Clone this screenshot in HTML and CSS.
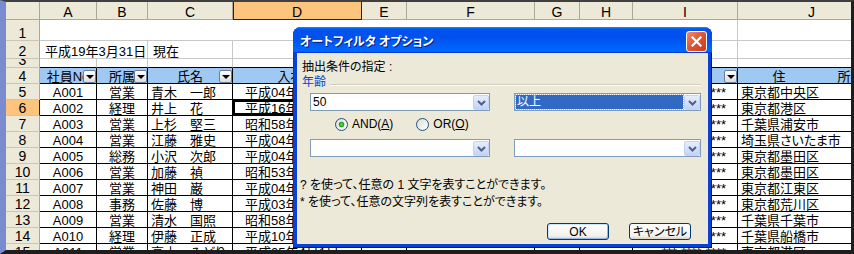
FILE: index.html
```html
<!DOCTYPE html>
<html lang="ja">
<head>
    <meta charset="UTF-8">
    <title>オートフィルタ オプション</title>
    <link rel="stylesheet" href="styles.css">
</head>
<body>
<div class="window">

    <!-- シート -->
    <div class="sheet">
        <div class="row colhead">
            <div class="cell"></div>
            <div class="cell">A</div>
            <div class="cell">B</div>
            <div class="cell">C</div>
            <div class="cell hl">D</div>
            <div class="cell">E</div>
            <div class="cell">F</div>
            <div class="cell">G</div>
            <div class="cell">H</div>
            <div class="cell">I</div>
            <div class="cell">J</div>
        </div>
        <div class="row r1">
            <div class="cell rh">1</div>
            <div class="cell span9"></div>
            <div class="cell"></div>
        </div>
        <div class="row r2">
            <div class="cell rh">2</div>
            <div class="cell span2 pad">平成19年3月31日</div>
            <div class="cell pad">現在</div>
            <div class="cell"></div>
            <div class="cell"></div>
            <div class="cell"></div>
            <div class="cell"></div>
            <div class="cell"></div>
            <div class="cell"></div>
            <div class="cell"></div>
        </div>
        <div class="row r3">
            <div class="cell rh">3</div>
            <div class="cell"></div>
            <div class="cell"></div>
            <div class="cell"></div>
            <div class="cell"></div>
            <div class="cell"></div>
            <div class="cell"></div>
            <div class="cell"></div>
            <div class="cell"></div>
            <div class="cell"></div>
            <div class="cell"></div>
        </div>
        <div class="row tbl hdr">
            <div class="cell rh">4</div>
            <div class="cell filter">社員No<span class="fbtn"></span></div>
            <div class="cell filter">所属<span class="fbtn"></span></div>
            <div class="cell filter">氏名<span class="fbtn"></span></div>
            <div class="cell">入社日</div>
            <div class="cell">勤続</div>
            <div class="cell">生年月日</div>
            <div class="cell">年齢</div>
            <div class="cell">性別</div>
            <div class="cell filter">電話番号<span class="fbtn"></span></div>
            <div class="cell">住　　　　所</div>
        </div>
        <div class="row tbl">
            <div class="cell rh">5</div>
            <div class="cell c">A001</div>
            <div class="cell c">営業</div>
            <div class="cell">青木　一郎</div>
            <div class="cell d">平成04年4月1日</div>
            <div class="cell"></div><div class="cell"></div><div class="cell"></div><div class="cell"></div>
            <div class="cell r">***-****-****</div>
            <div class="cell">東京都中央区</div>
        </div>
        <div class="row tbl">
            <div class="cell rh hl">6</div>
            <div class="cell c">A002</div>
            <div class="cell c">経理</div>
            <div class="cell">井上　花</div>
            <div class="cell d active">平成16年4月1日</div>
            <div class="cell"></div><div class="cell"></div><div class="cell"></div><div class="cell"></div>
            <div class="cell r">***-****-****</div>
            <div class="cell">東京都港区</div>
        </div>
        <div class="row tbl">
            <div class="cell rh">7</div>
            <div class="cell c">A003</div>
            <div class="cell c">営業</div>
            <div class="cell">上杉　堅三</div>
            <div class="cell d">昭和58年4月1日</div>
            <div class="cell"></div><div class="cell"></div><div class="cell"></div><div class="cell"></div>
            <div class="cell r">***-****-****</div>
            <div class="cell">千葉県浦安市</div>
        </div>
        <div class="row tbl">
            <div class="cell rh">8</div>
            <div class="cell c">A004</div>
            <div class="cell c">営業</div>
            <div class="cell">江藤　雅史</div>
            <div class="cell d">平成04年4月1日</div>
            <div class="cell"></div><div class="cell"></div><div class="cell"></div><div class="cell"></div>
            <div class="cell r">***-****-****</div>
            <div class="cell">埼玉県さいたま市</div>
        </div>
        <div class="row tbl">
            <div class="cell rh">9</div>
            <div class="cell c">A005</div>
            <div class="cell c">総務</div>
            <div class="cell">小沢　次郎</div>
            <div class="cell d">平成04年4月1日</div>
            <div class="cell"></div><div class="cell"></div><div class="cell"></div><div class="cell"></div>
            <div class="cell r">***-****-****</div>
            <div class="cell">東京都墨田区</div>
        </div>
        <div class="row tbl">
            <div class="cell rh">10</div>
            <div class="cell c">A006</div>
            <div class="cell c">営業</div>
            <div class="cell">加藤　禎</div>
            <div class="cell d">昭和53年4月1日</div>
            <div class="cell"></div><div class="cell"></div><div class="cell"></div><div class="cell"></div>
            <div class="cell r">***-****-****</div>
            <div class="cell">東京都墨田区</div>
        </div>
        <div class="row tbl">
            <div class="cell rh">11</div>
            <div class="cell c">A007</div>
            <div class="cell c">営業</div>
            <div class="cell">神田　巌</div>
            <div class="cell d">平成04年4月1日</div>
            <div class="cell"></div><div class="cell"></div><div class="cell"></div><div class="cell"></div>
            <div class="cell r">***-****-****</div>
            <div class="cell">東京都江東区</div>
        </div>
        <div class="row tbl">
            <div class="cell rh">12</div>
            <div class="cell c">A008</div>
            <div class="cell c">事務</div>
            <div class="cell">佐藤　博</div>
            <div class="cell d">平成03年4月1日</div>
            <div class="cell"></div><div class="cell"></div><div class="cell"></div><div class="cell"></div>
            <div class="cell r">***-****-****</div>
            <div class="cell">東京都荒川区</div>
        </div>
        <div class="row tbl">
            <div class="cell rh">13</div>
            <div class="cell c">A009</div>
            <div class="cell c">営業</div>
            <div class="cell">清水　国照</div>
            <div class="cell d">昭和58年4月1日</div>
            <div class="cell"></div><div class="cell"></div><div class="cell"></div><div class="cell"></div>
            <div class="cell r">***-****-****</div>
            <div class="cell">千葉県千葉市</div>
        </div>
        <div class="row tbl">
            <div class="cell rh">14</div>
            <div class="cell c">A010</div>
            <div class="cell c">経理</div>
            <div class="cell">伊藤　正成</div>
            <div class="cell d">平成10年4月1日</div>
            <div class="cell"></div><div class="cell"></div><div class="cell"></div><div class="cell"></div>
            <div class="cell r">***-****-****</div>
            <div class="cell">千葉県船橋市</div>
        </div>
        <div class="row tbl">
            <div class="cell rh">15</div>
            <div class="cell c">A011</div>
            <div class="cell c">営業</div>
            <div class="cell">高木　みどり</div>
            <div class="cell d">平成05年4月1日</div>
            <div class="cell"></div><div class="cell"></div><div class="cell"></div><div class="cell"></div>
            <div class="cell r">***-****-****</div>
            <div class="cell">東京都港区</div>
        </div>
    </div>

    <!-- ダイアログ -->
    <div class="dialog">
        <div class="titlebar">
            <span class="title">オートフィルタ オプション</span>
            <span class="close">
                <svg width="11" height="11" viewBox="0 0 11 11"><path d="M1.5 1.5 L9.5 9.5 M9.5 1.5 L1.5 9.5" stroke="#fff" stroke-width="2.2" stroke-linecap="square"/></svg>
            </span>
        </div>
        <div class="dlg-body">
            <div class="caption">抽出条件の指定 :</div>
            <div class="group">
                <span class="legend">年齢</span>
                <span class="group-line"></span>
            </div>
            <div class="combo-row">
                <div class="combo">
                    <span class="combo-text">50</span>
                    <span class="drop"><svg width="9" height="6" viewBox="0 0 9 6"><path d="M1 1 L4.5 4.5 L8 1" fill="none" stroke="#4d6185" stroke-width="2"/></svg></span>
                </div>
                <div class="combo wide">
                    <span class="combo-text"><span class="selected">以上</span></span>
                    <span class="drop"><svg width="9" height="6" viewBox="0 0 9 6"><path d="M1 1 L4.5 4.5 L8 1" fill="none" stroke="#4d6185" stroke-width="2"/></svg></span>
                </div>
            </div>
            <div class="radio-row">
                <label class="radio"><span class="dot checked"></span><span>AND(<u>A</u>)</span></label>
                <label class="radio"><span class="dot"></span><span>OR(<u>O</u>)</span></label>
            </div>
            <div class="combo-row">
                <div class="combo">
                    <span class="combo-text"></span>
                    <span class="drop"><svg width="9" height="6" viewBox="0 0 9 6"><path d="M1 1 L4.5 4.5 L8 1" fill="none" stroke="#4d6185" stroke-width="2"/></svg></span>
                </div>
                <div class="combo wide">
                    <span class="combo-text"></span>
                    <span class="drop"><svg width="9" height="6" viewBox="0 0 9 6"><path d="M1 1 L4.5 4.5 L8 1" fill="none" stroke="#4d6185" stroke-width="2"/></svg></span>
                </div>
            </div>
            <div class="hints">
                <div>? を使って、任意の 1 文字を表すことができます。</div>
                <div>* を使って、任意の文字列を表すことができます。</div>
            </div>
            <div class="buttons">
                <span class="btn default">OK</span>
                <span class="btn">キャンセル</span>
            </div>
        </div>
    </div>

</div>
</body>
</html>
```

FILE: styles.css
```css
* {
    box-sizing: border-box;
}

body {
    margin: 0;
    background: #1e1e1e;
    font-family: "Liberation Sans", "Noto Sans CJK JP", sans-serif;
    font-feature-settings: "palt";
}

.window {
    position: relative;
    width: 854px;
    height: 254px;
    overflow: hidden;
    background: #fff;
    border-top: 2px solid #404040;
    border-left: 6px solid #7b8bd0;
    border-right: 3px solid #1e1e1e;
    border-bottom: 4px solid #1e1e1e;
}

/* シート */
.row {
    display: grid;
    grid-template-columns: 34px 57px 51px 85px 129px 45px 128px 45px 53px 105px 148px;
    height: 16px;
    font-size: 13px;
}

.cell {
    display: flex;
    align-items: flex-end;
    overflow: hidden;
    white-space: nowrap;
    padding: 0 3px;
    line-height: 12px;
    border-right: 1px solid #c8c8c8;
    border-bottom: 1px solid #c8c8c8;
}

.colhead {
    height: 18px;
}

.colhead .cell {
    background: #ece9d8;
    border-right-color: #aca899;
    border-bottom-color: #aca899;
    justify-content: center;
    font-size: 14px;
    padding-bottom: 1px;
}

.colhead .hl {
    background: #fdc47d;
    border-right-color: #0a246a;
    border-bottom-color: #0a246a;
    box-shadow: inset 1px 0 #0a246a;
}

.r1 { height: 21px; }
.r2 { height: 18px; }
.r3 { height: 9px; }

.span9 { grid-column: span 9; }
.span2 { grid-column: span 2; }
.pad { padding-left: 5px; }

.rh {
    background: #ece9d8;
    border-right-color: #aca899;
    border-bottom-color: #cac6b4;
    justify-content: center;
    font-size: 14px;
    padding: 0 0 1px;
}

.rh.hl {
    background: #fdc47d;
    border-right-color: #0a246a;
}

.r3 .cell + .cell {
    border-bottom-color: #000;
}

.tbl .cell + .cell {
    border-color: #000;
}

.hdr .cell + .cell {
    background: #9fc8f3;
    justify-content: center;
}

.c { justify-content: center; }
.r { justify-content: flex-end; padding-right: 11px; }
.d { padding-left: 12px; }

.active {
    box-shadow: inset 0 0 0 2px #000;
}

.filter {
    position: relative;
}

.fbtn {
    position: absolute;
    right: 0;
    top: 2px;
    width: 13px;
    height: 13px;
    border: 1px solid #6b7b98;
    border-radius: 2px;
    background: linear-gradient(#ffffff, #dcdcdc);
}

.fbtn::after {
    content: "";
    position: absolute;
    left: 2px;
    top: 4px;
    border: 4px solid transparent;
    border-top: 4px solid #000;
    border-bottom: 0;
}

/* ダイアログ */
.dialog {
    position: absolute;
    left: 287px;
    top: 25px;
    width: 419px;
    height: 221px;
    display: flex;
    flex-direction: column;
    padding: 0 4px 4px;
    background: #0843d6;
    border-radius: 8px 8px 0 0;
    box-shadow: inset -1px -1px #00138c, inset 1px 0 #0831d9;
}

.titlebar {
    height: 26px;
    margin: 0 -4px;
    padding-left: 7px;
    display: flex;
    align-items: center;
    border-radius: 8px 8px 0 0;
    background: linear-gradient(#0997ff, #0053ee 8%, #0050ee 40%, #0066ff 88%, #0066ff 93%, #005bff 95%, #003dd7 96%, #003dd7);
    color: #fff;
    font-size: 12px;
    font-weight: bold;
    text-shadow: 1px 1px #0a1883;
}

.close {
    margin-left: auto;
    margin-right: 5px;
    margin-top: 3px;
    width: 21px;
    height: 21px;
    display: flex;
    align-items: center;
    justify-content: center;
    border: 1px solid #fff;
    border-radius: 3px;
    background: linear-gradient(135deg, #f08c68, #e0542e 50%, #c8401c);
}

.dlg-body {
    flex: 1;
    background: #ece9d8;
    padding: 7px 7px 0 5px;
    font-size: 12px;
    line-height: 14px;
    color: #000;
}

.caption {
    height: 14px;
}

.group {
    margin-top: 1px;
    height: 14px;
    display: flex;
    align-items: center;
}

.legend {
    color: #0046d5;
}

.group-line {
    flex: 1;
    height: 2px;
    margin: 6px 0 0 4px;
    border-top: 1px solid #d0d0bf;
    border-bottom: 1px solid #fff;
}

.combo-row {
    margin-top: 4px;
    padding-left: 8px;
    display: flex;
    justify-content: space-between;
}

.combo-row + .radio-row + .combo-row {
    margin-top: 8px;
}

.combo {
    width: 180px;
    height: 18px;
    display: flex;
    border: 1px solid #7f9db9;
    background: #fff;
}

.combo.wide {
    width: 187px;
}

.combo-text {
    flex: 1;
    display: flex;
    align-items: center;
    padding-left: 2px;
}

.selected {
    flex: 1;
    align-self: stretch;
    margin: 1px 1px 1px -1px;
    padding-left: 1px;
    display: flex;
    align-items: center;
    background: #316ac5;
    color: #fff;
    outline: 1px dotted #f5b400;
}

.drop {
    width: 16px;
    margin: 1px 0 0;
    display: flex;
    align-items: center;
    justify-content: center;
    border: 1px solid #c4d2f4;
    border-radius: 2px;
    background: linear-gradient(#e6eefd, #c3d3f8);
}

.radio-row {
    margin-top: 6px;
    height: 14px;
    padding-left: 33px;
    display: flex;
    gap: 23px;
}

.radio {
    display: flex;
    align-items: center;
    gap: 4px;
}

.dot {
    width: 13px;
    height: 13px;
    border: 1px solid #1c5180;
    border-radius: 50%;
    background: linear-gradient(135deg, #dcdcd7, #ffffff);
}

.dot.checked {
    background: radial-gradient(circle, #5ed35e 0, #21a121 2.5px, transparent 3.2px), linear-gradient(135deg, #dcdcd7, #ffffff);
}

.hints {
    margin: 20px 0 0 -2px;
    line-height: 17px;
}

.buttons {
    margin-top: 12px;
    padding-right: 10px;
    display: flex;
    justify-content: flex-end;
    gap: 20px;
}

.btn {
    width: 62px;
    height: 17px;
    display: flex;
    align-items: center;
    justify-content: center;
    border: 1px solid #003c74;
    border-radius: 3px;
    background: linear-gradient(#ffffff, #f2f1ec 80%, #d6d0c5);
}

.btn.default {
    box-shadow: inset 1px 1px #cee7ff, inset -1px -1px #98b8ea;
}
```
